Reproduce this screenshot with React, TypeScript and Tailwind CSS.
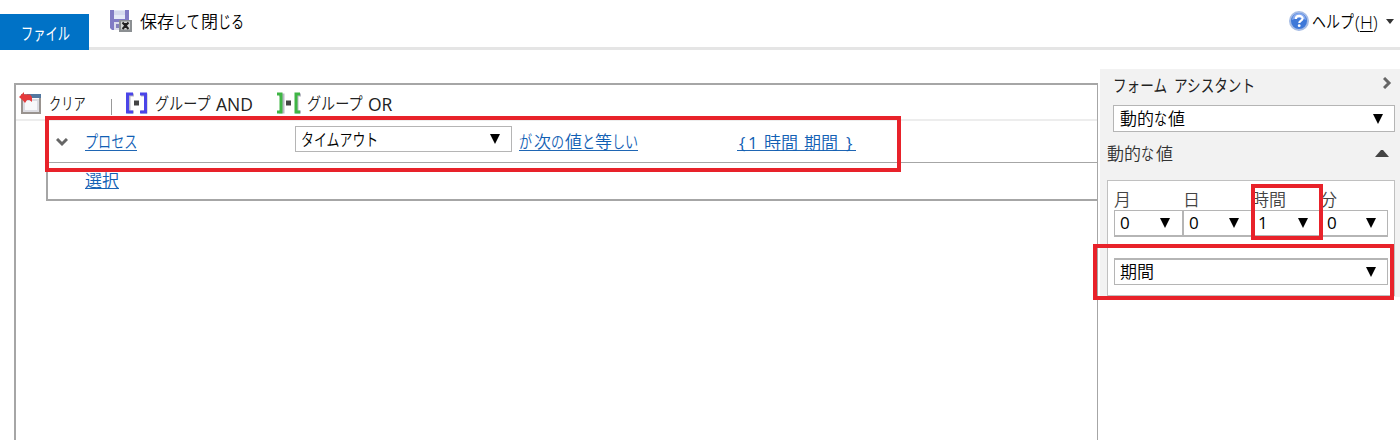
import React from "react";

type Props = { children?: React.ReactNode; className?: string };

/* Fixed-width slot holding horizontally condensed kana */
function Kana({ children, className = "" }: Props) {
  return (
    <span className={`inline-block whitespace-nowrap ${className}`}>
      <span className="inline-block origin-left scale-x-[0.77]">{children}</span>
    </span>
  );
}

function Down() {
  return (
    <svg width="10" height="10" viewBox="0 0 10 10" className="shrink-0">
      <path d="M0 0h10L5 10z" fill="#000" />
    </svg>
  );
}

function Select({ children, className = "" }: Props) {
  return (
    <div className={`flex items-center justify-between border-[#b5b5b5] bg-white text-black ${className}`}>
      <span className="whitespace-nowrap">{children}</span>
      <Down />
    </div>
  );
}

function SaveIcon() {
  return (
    <svg width="24" height="24" viewBox="0 0 24 24">
      <path d="M1 1h19v20H3l-2-2z" fill="#817bc4" />
      <path d="M5 1h11v9H5z" fill="#e6eaf7" />
      <path d="M5 3h11M5 5h11" stroke="#c6cae5" />
      <path d="M5 13h6v8H5z" fill="#dcdcec" />
      <path d="M7 15h3v4H7z" fill="#8580bd" />
      <path d="M10 11h13v12H10z" fill="#8b8f92" />
      <path d="M12 12.500h9v8h-9z" fill="#d5d8d6" />
      <path d="M13.500 13.500l6 6.500M19.500 13.500l-6 6.500" stroke="#222" strokeWidth="2" />
      <path d="M15 14h3v5h-3z" fill="#222" />
    </svg>
  );
}

function ClearIcon() {
  return (
    <svg width="23" height="23" viewBox="0 0 23 23">
      <path d="M3 3h18v18H3z" fill="#f8f8fa" stroke="#99938f" strokeWidth="2" />
      <path d="M5 8h14v11H5z" fill="none" stroke="#dcdce2" strokeWidth="2" />
      <path d="M8 2h14v4H8z" fill="#5378a0" />
      <path d="M0 5l5-5v2.500h6L13 5v5l-2.500-2H8l-2 3-2-2.500z" fill="#e5393b" />
    </svg>
  );
}

function GroupIcon({ or = false }: { or?: boolean }) {
  const c = or ? "#3fb545" : "#4b45e8";
  return (
    <svg width="24" height="23" viewBox="0 0 24 23">
      <g fill="none" stroke="#b9b9c4" strokeWidth="3" transform="translate(1 1)">
        <path d={or ? "M1 2h4v17H1M23 2h-4v17h4" : "M8 2H3v17h5M15 2h5v17h-5"} />
      </g>
      <path d={or ? "M0 2h4v18H0M23 2h-4v18h4" : "M8 2H2.500v18H8M15 2h5.500v18H15"} fill="none" stroke={c} strokeWidth="3" />
      <path d="M9 8.500h5v5H9z" fill="#444" />
    </svg>
  );
}

function HelpIcon() {
  return (
    <svg width="20" height="20" viewBox="0 0 20 20">
      <circle cx="10" cy="10" r="9" fill="#3e78d8" stroke="#a4bbe5" strokeWidth="2" />
      <path d="M3 9a7 7 0 0 1 14 0q-7-4-14 0z" fill="#86aaf0" />
      <path d="M6.800 8c0-4 6.800-4 6.800-.5 0 2-3.300 2.300-3.300 4.500" fill="none" stroke="#fff" strokeWidth="2.200" />
      <circle cx="10.200" cy="14.700" r="1.400" fill="#fff" />
    </svg>
  );
}

const link = "text-[#1160b4] border-b border-[#1f66b4] h-[19px] leading-[20px] whitespace-nowrap";

export default function App() {
  return (
    <div className="relative h-[440px] w-[1400px] overflow-hidden bg-white font-['Open_Sans','Noto_Sans_CJK_JP',sans-serif] text-[17px] leading-[20px] font-[350] text-[#222]">
      <header className="flex h-[50px] border-b-[3px] border-[#e5e5e5]">
        <div className="mt-[14px] h-[36px] w-[89px] shrink-0 bg-[#0072c6] pt-[10px] pl-[21px] font-normal text-white">
          <Kana className="w-[50px] [&>span]:scale-x-[0.72]">ファイル</Kana>
        </div>
        <div className="ml-[20px] flex pt-[9px]">
          <SaveIcon />
          <div className="ml-[7px] flex pt-[3px] text-black">
            保存<Kana className="w-[27px]">して</Kana>閉<Kana className="w-[28px]">じる</Kana>
          </div>
        </div>
        <div className="mr-[6px] ml-auto flex pt-[11px] text-black">
          <HelpIcon />
          <Kana className="ml-[3px] w-[43px] pt-px [&>span]:scale-x-[0.82]">ヘルプ</Kana>
          <span className="w-[27px] pt-px text-[18px]">(<u className="underline-offset-2">H</u>)</span>
          <svg width="8" height="5" viewBox="0 0 8 5" className="mt-[8px] ml-[4px]"><path d="M0 0h8L4 5z" fill="#333" /></svg>
        </div>
      </header>

      <div className="flex">
        <main className="mt-[33px] ml-[14px] h-[357px] w-[1084px] shrink-0 border-t-2 border-r border-l-2 border-[#a6a6a6]">
          <div className="flex h-[36px] border-b-2 border-[#ededed] pt-[7px] pl-[3px]">
            <ClearIcon />
            <Kana className="ml-[7px] w-[62px] pt-[2px] [&>span]:scale-x-[0.72]">クリア</Kana>
            <div className="mt-[7px] h-[16px] w-px bg-[#999]" />
            <div className="ml-[13px] flex w-[152px]">
              <GroupIcon />
              <Kana className="ml-[6px] w-[61px] pt-[2px] [&>span]:scale-x-[0.83]">グループ</Kana><span className="pt-[2px] text-[17.5px] font-normal">AND</span>
            </div>
            <GroupIcon or />
            <Kana className="ml-[6px] w-[61px] pt-[2px] [&>span]:scale-x-[0.83]">グループ</Kana><span className="pt-[2px] text-[17.5px] font-normal">OR</span>
          </div>
          <section className="ml-[30px] h-[80px] border-b-2 border-l-2 border-[#a6a6a6]">
            <div className="flex h-[42px] border-b border-[#a6a6a6]">
              <svg width="12" height="9" viewBox="0 0 12 9" className="mt-[17px] ml-[8px]"><path d="M1 1l5 5 5-5" fill="none" stroke="#666" strokeWidth="3" /></svg>
              <div className={`${link} mt-[11px] ml-[17px] w-[52px]`}><Kana className="w-[52px]">プロセス</Kana></div>
              <Select className="mt-[5px] ml-[158px] h-[26px] w-[217px] border pr-[11px] pl-[5px]"><Kana className="w-[80px] pt-px [&>span]:scale-x-[0.76]">タイムアウト</Kana></Select>
              <div className={`${link} mt-[11px] ml-[7px] flex w-[119px]`}>
                <Kana className="w-[15px]">が</Kana>次<Kana className="w-[14px]">の</Kana>値<Kana className="w-[13px]">と</Kana>等<Kana className="w-[26px]">しい</Kana>
              </div>
              <div className={`${link} mt-[11px] ml-[99px] flex w-[119px] pt-px`}>
                <span className="w-[11px] pl-[2px] font-normal">{"{"}</span>
                <span className="w-[16px] font-normal">1</span>
                <span className="w-[40px]">時間</span>
                <span className="w-[42px]">期間</span>
                <span className="font-normal">{"}"}</span>
              </div>
            </div>
            <div className={`${link} mt-[7px] ml-[37px] w-[34px] pt-px`}>選択</div>
          </section>
        </main>

        <aside className="mt-[19px] ml-[2px] h-[228px] w-[300px] shrink-0 bg-[#f2f2f2] pl-[7px]">
          <div className="flex h-[36px] justify-between pt-[7px] pr-[8px] pl-[6px] font-normal text-[#222]">
            <div className="flex"><Kana className="w-[61px] [&>span]:scale-x-[0.8]">フォーム</Kana><Kana className="w-[85px] [&>span]:scale-x-[0.8]">アシスタント</Kana></div>
            <svg width="9" height="12" viewBox="0 0 9 12" className="mt-px"><path d="M1 1l5 5-5 5" fill="none" stroke="#666" strokeWidth="3" /></svg>
          </div>
          <Select className="ml-[6px] h-[27px] w-[282px] border pr-[11px] pl-[6px]"><span className="inline-block pt-px">動的<Kana className="w-[14px]">な</Kana>値</span></Select>
          <div className="flex h-[48px] justify-between pt-[12px] pr-[11px] text-[#333]">
            <span>動的<Kana className="w-[15px]">な</Kana>値</span>
            <svg width="14" height="7" viewBox="0 0 14 7" className="mt-[6px]"><path d="M0 7L6 0h2l6 7z" fill="#444" /></svg>
          </div>
          <div className="h-[116px] w-[288px] border border-[#c0c0c0] bg-white pt-[9px] pl-[6px]">
            <div className="flex h-[20px] text-[#444]">
              <span className="w-[69px]">月</span><span className="w-[69px]">日</span><span className="w-[68px]">時間</span><span>分</span>
            </div>
            <div className="flex font-normal">
              <Select className="h-[27px] w-[69px] border border-b-2 pr-[12px] pl-[5px]">0</Select>
              <Select className="h-[27px] w-[69px] border border-b-2 pr-[12px] pl-[5px]">0</Select>
              <Select className="h-[27px] w-[69px] border border-b-2 pr-[12px] pl-[5px]">1</Select>
              <Select className="h-[27px] w-[67px] border border-b-2 pr-[11px] pl-[5px]">0</Select>
            </div>
            <Select className="mt-[21px] h-[27px] w-[274px] border border-t-2 pr-[11px] pl-[5px]">期間</Select>
          </div>
        </aside>
      </div>

      <div className="absolute top-[116px] left-[45px] h-[56px] w-[856px] border-4 border-[#e8222a]" />
      <div className="absolute top-[184px] left-[1251px] h-[56px] w-[72px] border-4 border-[#e8222a]" />
      <div className="absolute top-[244px] left-[1093px] h-[56px] w-[301px] border-4 border-[#e8222a]" />
    </div>
  );
}
